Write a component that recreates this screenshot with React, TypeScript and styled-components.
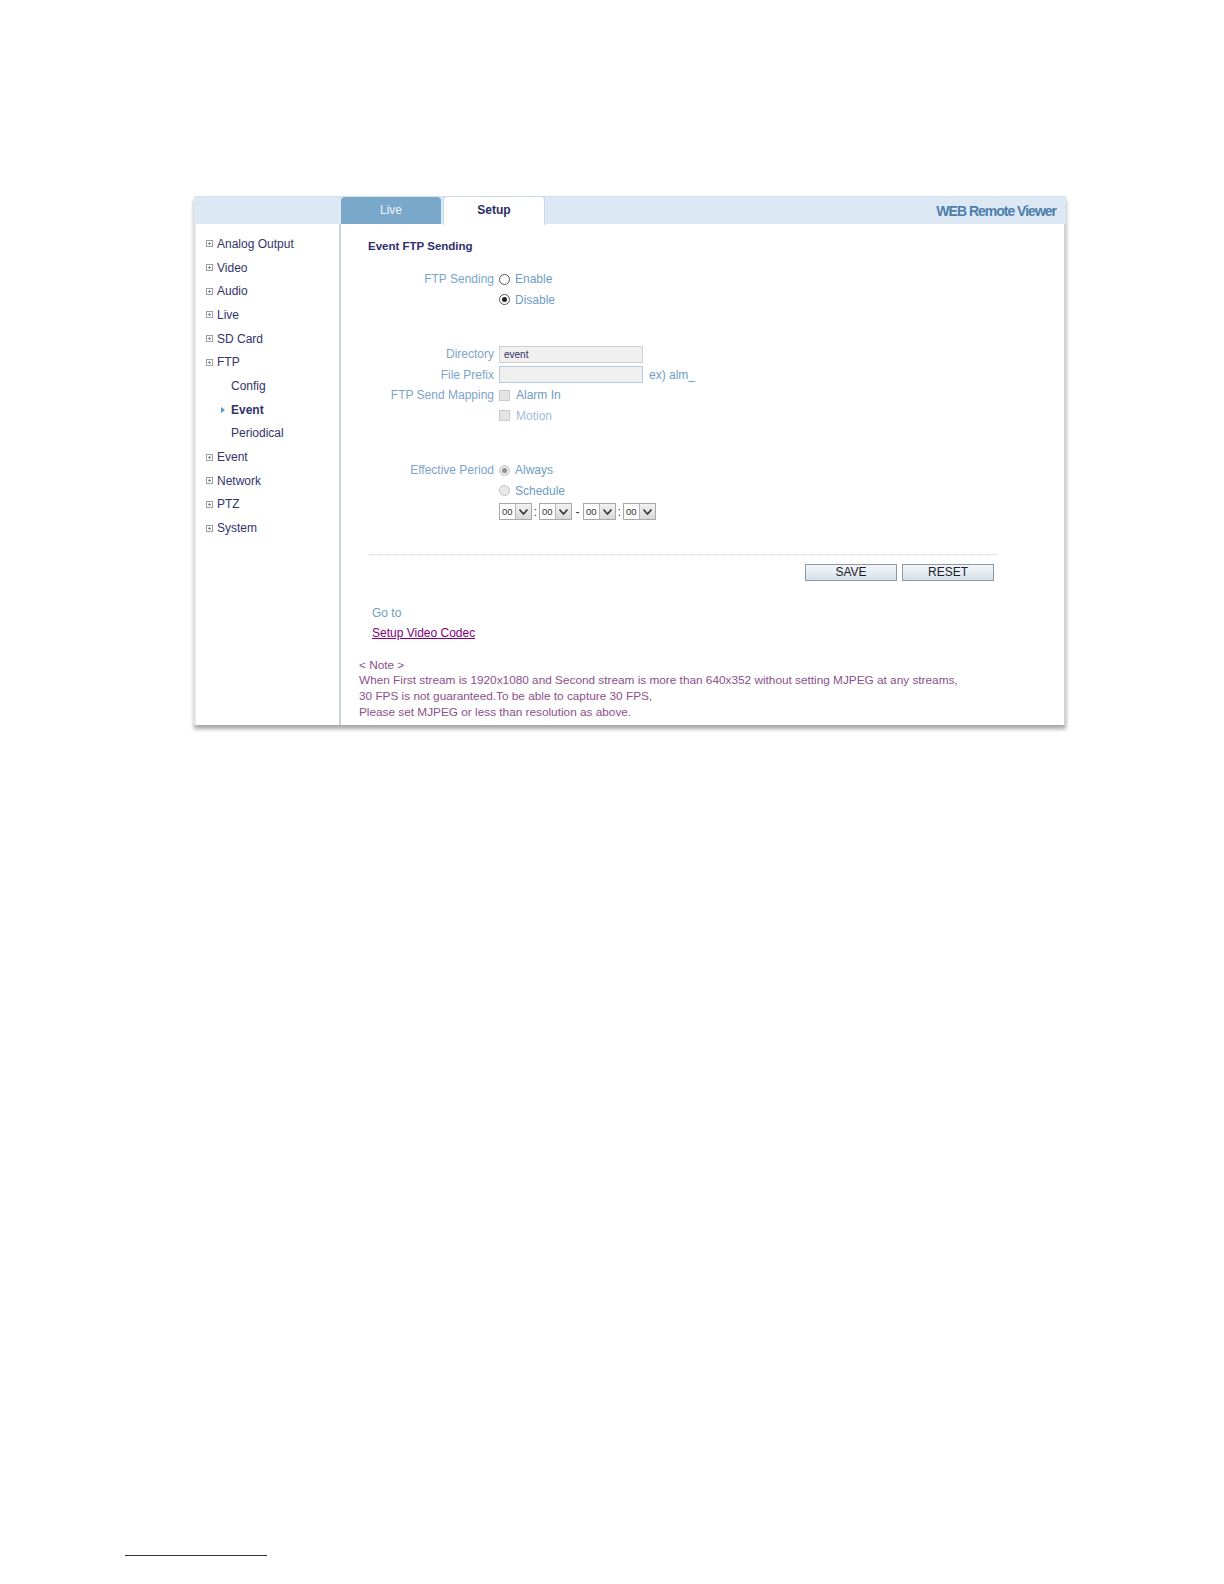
import React from 'react';
import styled, { createGlobalStyle } from 'styled-components';

const GlobalStyle = createGlobalStyle`
  html, body {
    margin: 0;
    padding: 0;
    overflow: hidden;
    background: #ffffff;
    font-family: "Liberation Sans", Arial, sans-serif;
  }
`;

const Page = styled.div`
  padding-top: 196px;
`;

const Frame = styled.div`
  margin-left: 194px;
  width: 872px;
  background: #ffffff;
  box-shadow: 0 4px 4px rgba(0, 0, 0, 0.35);
`;

const Header = styled.div`
  display: flex;
  align-items: flex-end;
  height: 28px;
  background: #dce9f4;
  border-top: 1px solid #d2e2ef;
  box-sizing: border-box;
`;

const HeaderSpacer = styled.div`
  width: 147px;
`;

const Tab = styled.div<{ $active?: boolean }>`
  width: ${p => (p.$active ? '102px' : '100px')};
  height: ${p => (p.$active ? '29px' : '27px')};
  margin-right: 2px;
  margin-bottom: ${p => (p.$active ? '-1px' : '0')};
  display: flex;
  align-items: center;
  justify-content: center;
  box-sizing: border-box;
  border-radius: 4px 4px 0 0;
  font-size: 12px;
  background: ${p => (p.$active ? '#ffffff' : '#7aa8cb')};
  color: ${p => (p.$active ? '#2b2b66' : '#eef4fa')};
  font-weight: ${p => (p.$active ? 'bold' : 'normal')};
  border: ${p => (p.$active ? '1px solid #c9dae8' : 'none')};
  border-bottom: none;
  padding-bottom: ${p => (p.$active ? '3px' : '1px')};
`;

const Brand = styled.div`
  margin-left: auto;
  margin-right: 10px;
  align-self: center;
  font-size: 14px;
  font-weight: bold;
  letter-spacing: -1px;
  color: #4d7eab;
`;

const Body = styled.div`
  display: flex;
`;

const Sidebar = styled.div`
  width: 147px;
  padding-top: 8px;
  border-left: 2px solid #e4e8ec;
  border-right: 2px solid #cdd4da;
  box-sizing: border-box;
  flex-shrink: 0;
`;

const MenuItem = styled.div<{ $sub?: boolean; $current?: boolean }>`
  display: flex;
  align-items: center;
  height: 23.7px;
  padding-left: ${p => (p.$sub ? '35px' : '10px')};
  font-size: 12px;
  color: #33336b;
  font-weight: ${p => (p.$current ? 'bold' : 'normal')};
`;

const PlusBox = styled.span`
  width: 5px;
  height: 5px;
  margin-right: 4px;
  border: 1px solid #9aa0a8;
  position: relative;
  &::before {
    content: '';
    position: absolute;
    left: 1px;
    top: 2px;
    width: 3px;
    height: 1px;
    background: #8a9099;
  }
  &::after {
    content: '';
    position: absolute;
    left: 2px;
    top: 1px;
    width: 1px;
    height: 3px;
    background: #8a9099;
  }
`;

const Arrow = styled.span`
  width: 0;
  height: 0;
  margin-left: -10px;
  margin-right: 6px;
  border-top: 3px solid transparent;
  border-bottom: 3px solid transparent;
  border-left: 4px solid #5b95c8;
`;

const Main = styled.div`
  flex: 1;
  padding: 14px 0 5px 18px;
  border-right: 2px solid #cfd3d7;
`;

const Title = styled.div`
  margin-left: 9px;
  font-size: 11.5px;
  line-height: 16px;
  font-weight: bold;
  color: #2e2e6e;
`;

const Form = styled.div`
  margin-left: 9px;
  margin-top: 15px;
  width: 629px;
`;

const Row = styled.div`
  display: grid;
  grid-template-columns: 126px 1fr;
  column-gap: 5px;
  align-items: center;
  height: 20.5px;
`;

const Label = styled.div`
  text-align: right;
  font-size: 12px;
  color: #7da4c8;
  white-space: nowrap;
`;

const Control = styled.div<{ $muted?: boolean }>`
  display: flex;
  align-items: center;
  font-size: 12px;
  color: ${p => (p.$muted ? '#a3bdd5' : '#6f9cc6')};
`;

const Gap = styled.div`
  height: 34px;
`;

const Radio = styled.span<{ $checked?: boolean; $disabled?: boolean }>`
  width: 11px;
  height: 11px;
  border-radius: 50%;
  box-sizing: border-box;
  margin-right: 5px;
  border: 1px solid ${p => (p.$disabled ? '#c4c4c4' : '#555555')};
  background: ${p => (p.$disabled ? '#e8e8e8' : '#ffffff')};
  display: flex;
  align-items: center;
  justify-content: center;
  &::after {
    content: '';
    display: ${p => (p.$checked ? 'block' : 'none')};
    width: 5px;
    height: 5px;
    border-radius: 50%;
    background: ${p => (p.$disabled ? '#8e8e8e' : '#222222')};
  }
`;

const Check = styled.span`
  width: 11px;
  height: 11px;
  box-sizing: border-box;
  margin-right: 6px;
  border: 1px solid #cacaca;
  background: #e4e4e4;
`;

const TextBox = styled.div<{ $filled?: boolean }>`
  width: 144px;
  height: 17px;
  box-sizing: border-box;
  padding-left: 4px;
  display: flex;
  align-items: center;
  background: #f0f0f0;
  border: 1px solid ${p => (p.$filled ? '#d0d0d0' : '#b9cbdc')};
  font-size: 10px;
  color: #2e2e66;
`;

const Hint = styled.span`
  margin-left: 6px;
  color: #6f9cc6;
`;

const Times = styled.div`
  display: flex;
  align-items: center;
  margin-top: 1px;
`;

const Select = styled.div`
  width: 33px;
  height: 17px;
  box-sizing: border-box;
  display: flex;
  border: 1px solid #a9a9a9;
  background: #ffffff;
`;

const SelectValue = styled.span`
  flex: 1;
  padding-left: 2px;
  font-size: 9.5px;
  line-height: 15px;
  color: #333333;
`;

const SelectButton = styled.span`
  width: 15px;
  display: flex;
  align-items: center;
  justify-content: center;
  background: linear-gradient(#f2f2f2, #d9d9d9);
  border-left: 1px solid #b5b5b5;
`;

const Sep = styled.span<{ $wide?: boolean }>`
  width: ${p => (p.$wide ? '11px' : '7px')};
  text-align: center;
  font-size: 12px;
  color: #333333;
`;

const Divider = styled.div`
  margin-top: 32px;
  border-top: 1px dotted #d4d4d4;
`;

const Buttons = styled.div`
  display: flex;
  justify-content: flex-end;
  gap: 5px;
  padding-right: 3px;
  margin-top: 9px;
`;

const Button = styled.div`
  width: 92px;
  height: 17px;
  box-sizing: border-box;
  display: flex;
  align-items: center;
  justify-content: center;
  font-size: 12px;
  color: #1e1e1e;
  border: 1px solid #8b98a5;
  background: linear-gradient(#f4f7fa, #d6e0ea);
`;

const GoTo = styled.div`
  margin-left: 13px;
  margin-top: 22px;
  font-size: 12px;
  line-height: 20px;
  color: #6f9cc6;
`;

const CodecLink = styled.a`
  display: block;
  margin-left: 13px;
  font-size: 12px;
  line-height: 20px;
  color: #800080;
  text-decoration: underline;
`;

const Note = styled.div`
  margin-top: 15px;
  font-size: 11.8px;
  line-height: 15.7px;
  color: #8b4f8c;
`;

const FootRule = styled.div`
  margin: 830px 0 0 125px;
  width: 142px;
  height: 1px;
  background: #333333;
`;

const Chevron = () => (
  <svg width="11" height="8" viewBox="0 0 11 8">
    <polyline points="1.5,1.5 5.5,6 9.5,1.5" fill="none" stroke="#333" strokeWidth="1.6" />
  </svg>
);

const TimeSelect = () => (
  <Select>
    <SelectValue>00</SelectValue>
    <SelectButton>
      <Chevron />
    </SelectButton>
  </Select>
);

const menu = [
  { label: 'Analog Output' },
  { label: 'Video' },
  { label: 'Audio' },
  { label: 'Live' },
  { label: 'SD Card' },
  { label: 'FTP' },
  { label: 'Config', sub: true },
  { label: 'Event', sub: true, current: true },
  { label: 'Periodical', sub: true },
  { label: 'Event' },
  { label: 'Network' },
  { label: 'PTZ' },
  { label: 'System' },
];

export default function App() {
  return (
    <Page>
      <GlobalStyle />
      <Frame>
        <Header>
          <HeaderSpacer />
          <Tab>Live</Tab>
          <Tab $active>Setup</Tab>
          <Brand>WEB Remote Viewer</Brand>
        </Header>
        <Body>
          <Sidebar>
            {menu.map((m, i) => (
              <MenuItem key={i} $sub={m.sub} $current={m.current}>
                {m.sub ? m.current && <Arrow /> : <PlusBox />}
                {m.label}
              </MenuItem>
            ))}
          </Sidebar>
          <Main>
            <Title>Event FTP Sending</Title>
            <Form>
              <Row>
                <Label>FTP Sending</Label>
                <Control>
                  <Radio />
                  Enable
                </Control>
              </Row>
              <Row>
                <Label />
                <Control>
                  <Radio $checked />
                  Disable
                </Control>
              </Row>
              <Gap />
              <Row>
                <Label>Directory</Label>
                <Control>
                  <TextBox $filled>event</TextBox>
                </Control>
              </Row>
              <Row>
                <Label>File Prefix</Label>
                <Control>
                  <TextBox />
                  <Hint>ex) alm_</Hint>
                </Control>
              </Row>
              <Row>
                <Label>FTP Send Mapping</Label>
                <Control>
                  <Check />
                  Alarm In
                </Control>
              </Row>
              <Row>
                <Label />
                <Control $muted>
                  <Check />
                  Motion
                </Control>
              </Row>
              <Gap />
              <Row>
                <Label>Effective Period</Label>
                <Control>
                  <Radio $checked $disabled />
                  Always
                </Control>
              </Row>
              <Row>
                <Label />
                <Control>
                  <Radio $disabled />
                  Schedule
                </Control>
              </Row>
              <Row>
                <Label />
                <Times>
                  <TimeSelect />
                  <Sep>:</Sep>
                  <TimeSelect />
                  <Sep $wide>-</Sep>
                  <TimeSelect />
                  <Sep>:</Sep>
                  <TimeSelect />
                </Times>
              </Row>
              <Divider />
              <Buttons>
                <Button>SAVE</Button>
                <Button>RESET</Button>
              </Buttons>
            </Form>
            <GoTo>Go to</GoTo>
            <CodecLink href="#">Setup Video Codec</CodecLink>
            <Note>
              &lt; Note &gt;
              <br />
              When First stream is 1920x1080 and Second stream is more than 640x352 without setting MJPEG at any streams,
              <br />
              30 FPS is not guaranteed.To be able to capture 30 FPS,
              <br />
              Please set MJPEG or less than resolution as above.
            </Note>
          </Main>
        </Body>
      </Frame>
      <FootRule />
    </Page>
  );
}
